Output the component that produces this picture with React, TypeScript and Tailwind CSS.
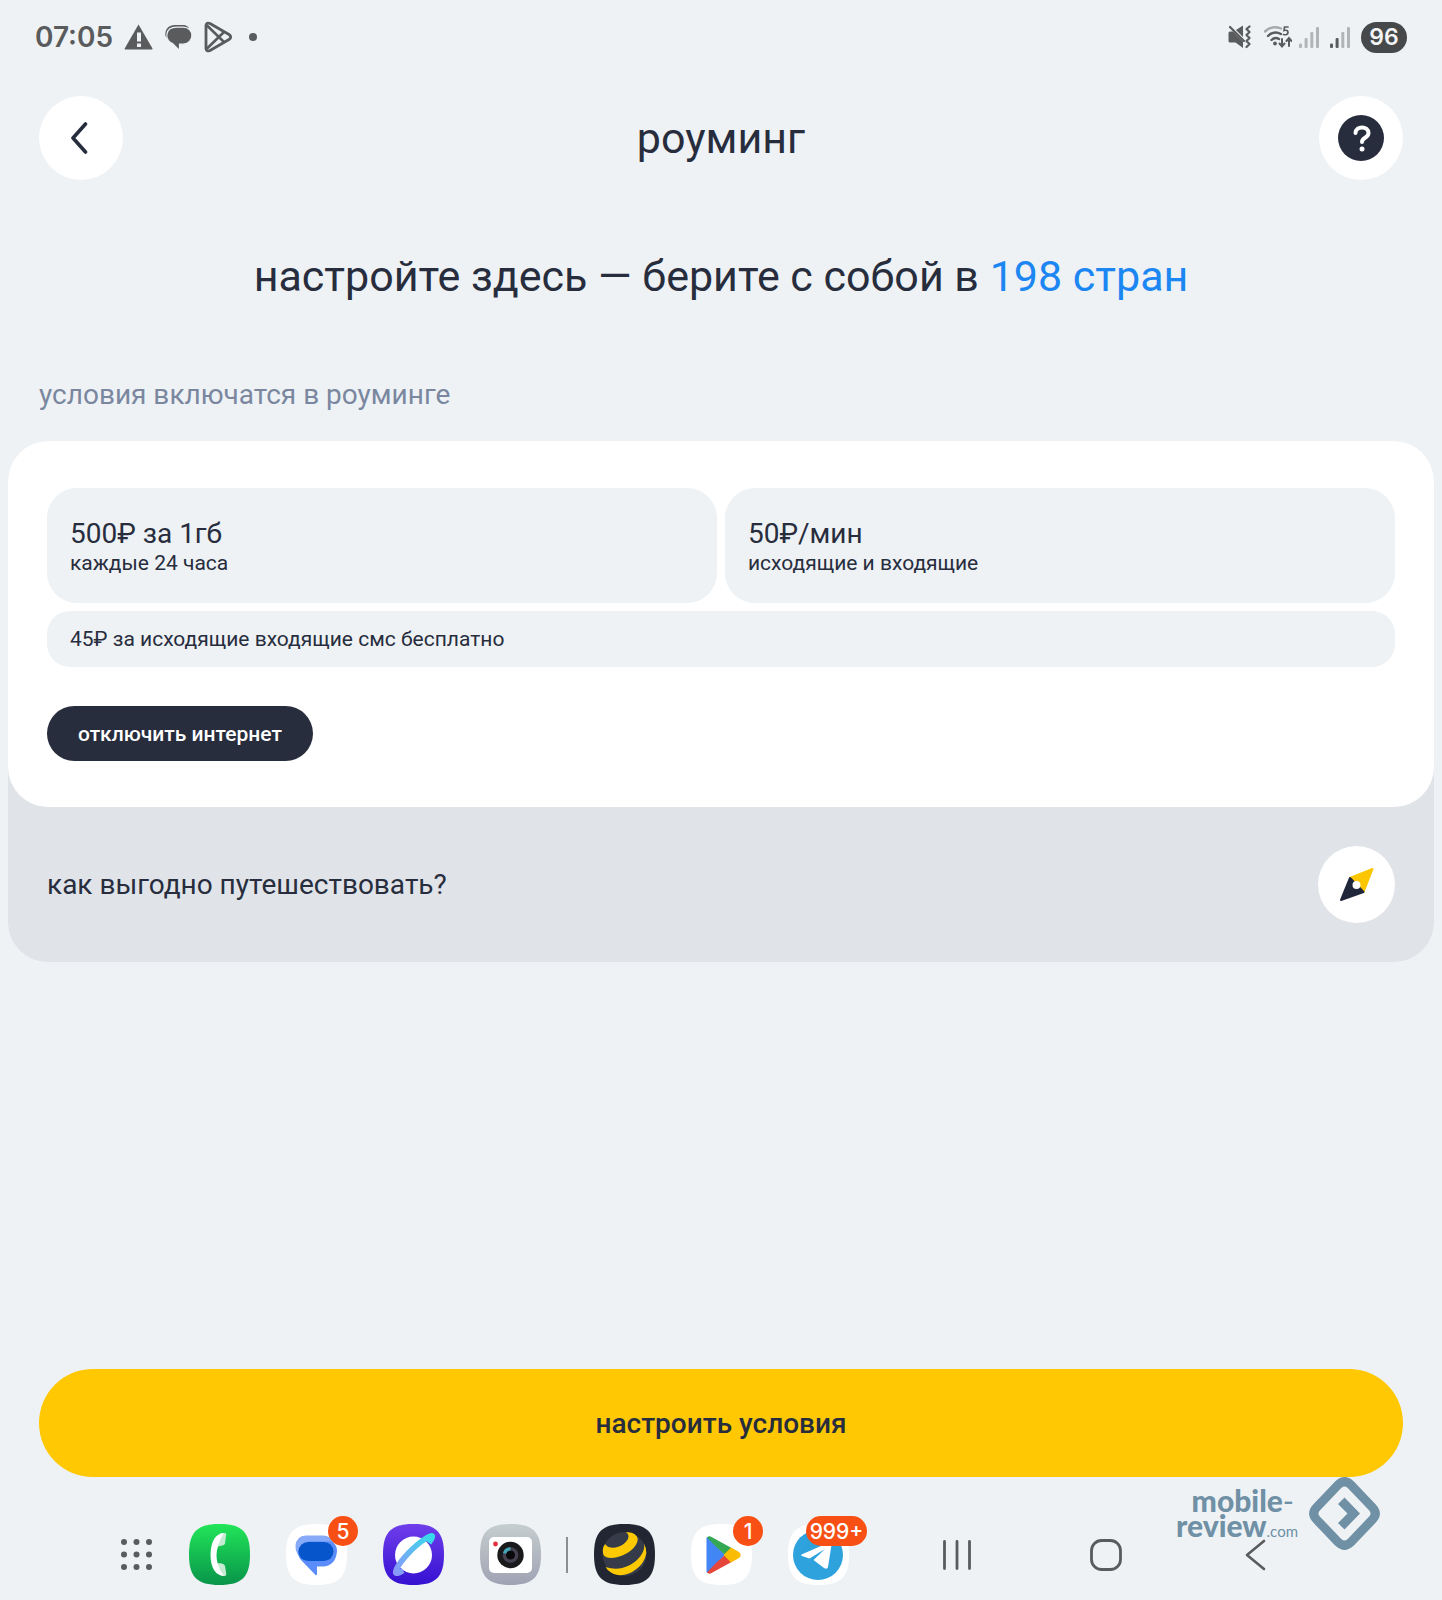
import React from 'react';

interface AppIconProps {
  label: string;
  badge?: string;
  children: React.ReactNode;
}

const SQUIRCLE = 'M30.5 0C53 0 61 8 61 30.5S53 61 30.5 61 0 53 0 30.5 8 0 30.5 0Z';

const AppIcon: React.FC<AppIconProps> = ({ label, badge, children }) => (
  <button type="button" aria-label={label} className="relative block">
    <svg width="61" height="61" viewBox="0 0 61 61">
      {children}
    </svg>
    {badge && (
      <span
        className={`absolute -top-2 flex h-[30px] items-center justify-center rounded-full bg-[#f84f14] font-['Inter'] text-[21px] leading-none font-medium text-white ${
          badge.length > 1 ? 'left-[18px] w-[61px]' : 'left-[42px] w-[30px]'
        }`}
      >
        {badge}
      </span>
    )}
  </button>
);

const StatusBar = () => (
  <div className="flex h-[74px] items-center justify-between px-[35px] font-['Inter'] text-[#5a5b5c]">
    <div className="flex items-center">
      <span className="w-[89px] text-[28px] font-semibold">07:05</span>
      <svg className="mr-3" width="29" height="26" viewBox="0 0 28 26">
        <path d="M14 0.5L28 24.5Q28.200 25.500 27 25.500H1Q-0.200 25.500 0.200 24.500Z" fill="currentColor" />
        <path d="M12.500 8.500h4v9h-4zM12.500 19.500h4v3.500h-4z" fill="#eef2f5" />
      </svg>
      <svg className="mr-[11px]" width="28" height="28" viewBox="0 0 28 28">
        <path d="M0.500 13C-0.500 7 3 2 10 2H17C20 2 22 2.500 24 5L12 14L2 15Z" fill="currentColor" />
        <path
          d="M11.500 4.200H18C30 4.200 29.500 20.500 18.500 21.200H14.500V27.500L7.500 20.500C-1 16.500 0 4.200 11.500 4.200Z"
          fill="currentColor"
          stroke="#eef2f5"
          strokeWidth="1.200"
        />
      </svg>
      <svg width="29" height="32" viewBox="0 0 29 32" fill="none" stroke="currentColor" strokeWidth="2.800">
        <path d="M2 4.500Q2.500 1 6 2.500L25 13.500Q28.500 16 25 18.500L6 29.500Q2.500 31 2 27.500Z" strokeLinejoin="round" />
        <path d="M3 4.500L20 21M3 27.500L20 11" strokeWidth="2.600" />
      </svg>
      <span className="ml-4 h-2 w-2 rounded-full bg-[#5a5b5c]" />
    </div>
    <div className="flex items-center">
      {/* Muted / vibrate */}
      <svg className="mr-3" width="24" height="24" viewBox="0 0 24 24" fill="none">
        <path d="M0.500 8Q0.500 6.500 2 6.500H5L15 16.500V23L7.500 17.500H2Q0.500 17.500 0.500 16ZM8 5L15 0.500V12Z" fill="currentColor" />
        <path d="M2 2L16 16" stroke="currentColor" strokeWidth="2.200" strokeLinecap="round" />
        <path
          d="M21.500 1.500L18.500 4L21.500 7L18.500 10L21.500 13L18.500 16L21.500 19L18.500 22"
          stroke="currentColor"
          strokeWidth="2.200"
          strokeLinejoin="round"
          strokeLinecap="round"
        />
      </svg>
      {/* Wi-Fi */}
      <svg className="mr-[7px]" width="28" height="24" viewBox="0 0 28 24" fill="none" strokeLinecap="round">
        <path d="M1 6.500Q8 0 17 3.500" stroke="#a6a9ab" strokeWidth="2.400" />
        <path d="M4 11Q10 5 17 9M7.500 15Q11 11.500 15 14" stroke="currentColor" strokeWidth="2.400" />
        <circle cx="11" cy="18.500" r="1.900" fill="currentColor" />
        <path d="M24 2H20.500L20 5.500Q24 4.500 24 7.500Q23.500 10.500 19.500 9.500" stroke="currentColor" strokeWidth="1.700" />
        <path d="M18 14V21M15.500 18.500L18 21.500L20.500 18.500M25 21V13.500M22.500 16L25 13L27.500 16" stroke="currentColor" strokeWidth="2" />
      </svg>
      <svg className="mr-[11px]" width="20" height="22" viewBox="0 0 20 22" fill="#b2b5b7">
        <rect y="17.500" width="3" height="4.500" rx="1" />
        <rect x="5.600" y="12" width="3" height="10" rx="1" />
        <rect x="11.300" y="6" width="3" height="16" rx="1" />
        <rect x="17" y="1" width="3" height="21" rx="1" />
      </svg>
      <svg className="mr-[11px]" width="20" height="22" viewBox="0 0 20 22" fill="#b2b5b7">
        <rect y="17.500" width="3" height="4.500" rx="1" fill="#5a5b5c" />
        <rect x="5.600" y="12" width="3" height="10" rx="1" fill="#5a5b5c" />
        <rect x="11.300" y="6" width="3" height="16" rx="1" />
        <rect x="17" y="1" width="3" height="21" rx="1" />
      </svg>
      <span className="flex h-[31px] w-[46px] items-center justify-center rounded-full bg-[#474849] text-[23px] leading-none font-semibold text-[#f3f4f5]">
        96
      </span>
    </div>
  </div>
);

const Header = () => (
  <header className="mt-[22px] flex items-center justify-between px-[39px]">
    <button type="button" aria-label="назад" className="flex h-[84px] w-[84px] items-center justify-center rounded-full bg-white">
      <svg className="mr-[5px]" width="18" height="34" viewBox="0 0 18 34" fill="none">
        <path d="M15.500 3L3 17L15.500 31" stroke="#272d3d" strokeWidth="3.600" strokeLinecap="round" strokeLinejoin="round" />
      </svg>
    </button>
    <h1 className="text-[43px] leading-[56px]">роуминг</h1>
    <button type="button" aria-label="помощь" className="flex h-[84px] w-[84px] items-center justify-center rounded-full bg-white">
      <svg width="46" height="46" viewBox="0 0 46 46" fill="none">
        <circle cx="23" cy="23" r="23" fill="#272d3d" />
        <path d="M17.500 18C17.500 10.500 30.500 10.500 30.500 18C30.500 23 24 22.500 24 27" stroke="#fff" strokeWidth="4" strokeLinecap="round" />
        <circle cx="24" cy="34" r="2.500" fill="#fff" />
      </svg>
    </button>
  </header>
);

const Conditions = () => (
  <section className="mx-2 rounded-[40px] bg-[#e0e3e8]">
    <div className="rounded-[40px] bg-white px-[39px] pt-[47px] pb-[46px]">
      <div className="grid grid-cols-2 gap-2">
        <div className="h-[115px] rounded-[30px] bg-[#eef2f5] px-[23px] pt-[30px]">
          <p className="text-[28px] leading-8">500₽ за 1гб</p>
          <p className="text-[21px] leading-[26px]">каждые 24 часа</p>
        </div>
        <div className="h-[115px] rounded-[30px] bg-[#eef2f5] px-[23px] pt-[30px]">
          <p className="text-[28px] leading-8">50₽/мин</p>
          <p className="text-[21px] leading-[26px]">исходящие и входящие</p>
        </div>
      </div>
      <p className="mt-2 rounded-[23px] bg-[#eef2f5] px-[23px] py-[15px] text-[21px] leading-[26px]">
        45₽ за исходящие входящие смс бесплатно
      </p>
      <button type="button" className="mt-[39px] h-[55px] rounded-full bg-[#272d3d] px-[31px] text-[21px] leading-[26px] font-medium text-white">
        отключить интернет
      </button>
    </div>
    <a href="#travel" className="flex items-center justify-between px-[39px] py-[39px]">
      <span className="text-[28px] leading-9">как выгодно путешествовать?</span>
      <svg width="77" height="77" viewBox="0 0 77 77" strokeLinejoin="round" strokeWidth="2">
        <circle cx="38.500" cy="38.500" r="38.500" fill="#fff" />
        <path d="M54.500 23L32 32L45.500 46Z" fill="#fcc602" stroke="#fcc602" />
        <path d="M32 32L23 54L45.500 46Z" fill="#20273a" stroke="#20273a" />
        <circle cx="38.500" cy="39" r="4" fill="#fff" />
      </svg>
    </a>
  </section>
);

const Dock = () => (
  <nav className="flex h-[61px] items-center justify-between pr-[171px] pl-[120px]">
    <div className="flex items-center">
      <div className="flex items-center gap-9">
        <button type="button" aria-label="Приложения">
          <svg width="33" height="33" viewBox="0 0 33 33" fill="#5a5b5c">
            {[4, 16.5, 29].map((y) => [4, 16.5, 29].map((x) => <circle key={`${x}-${y}`} cx={x} cy={y} r="3" />))}
          </svg>
        </button>
        <AppIcon label="Телефон">
          <defs>
            <linearGradient id="phone" x2="0" y2="1">
              <stop stopColor="#22e558" />
              <stop offset="1" stopColor="#08944a" />
            </linearGradient>
          </defs>
          <path d={SQUIRCLE} fill="url(#phone)" />
          <path d="M31 9.500L36 9Q37.500 9 37.200 10.500L36 19.500Q35.500 21.500 33 21.500L29 22.500ZM28.500 39L33 39.500Q35.500 40 36 42L37.300 50Q37.500 52 35.500 52L31 51Z" fill="#c5ecd2" />
          <path d="M35 9L31 16L29 22.500Q27.500 26 27.500 31Q27.500 35 28.500 39L31 46L35 52Q22 51 21.500 31Q22 10 35 9Z" fill="#fff" />
        </AppIcon>
        <AppIcon label="Сообщения" badge="5">
          <path d={SQUIRCLE} fill="#fff" />
          <path d="M20 11.500H37Q45 11.500 48 19L44 36H22Q9.500 34 9.500 22Q10 12 20 11.500Z" fill="#86a9f8" />
          <path d="M22 17.500H45Q51 20 51 27Q50 41 38 42.500H31V50Q31 52 29.500 51L15 36Q11 31 12.500 26Z" fill="#5b8dfa" />
          <rect x="12.500" y="18" width="35" height="19" rx="9.500" fill="#0755cb" />
        </AppIcon>
        <AppIcon label="Интернет">
          <defs>
            <linearGradient id="browser" x2="0" y2="1">
              <stop stopColor="#6f3eea" />
              <stop offset="1" stopColor="#3511d2" />
            </linearGradient>
            <linearGradient id="ring" x1="1" x2="0" y2="1">
              <stop stopColor="#35dbe9" />
              <stop offset="1" stopColor="#8b98fa" />
            </linearGradient>
          </defs>
          <path d={SQUIRCLE} fill="url(#browser)" />
          <circle cx="30.500" cy="31" r="18.500" fill="#fff" />
          <path d="M46 19C53 9 48 11 42 15C31 22 18 36 13.500 45C11 51 14 50 20 46.500" fill="none" stroke="url(#ring)" strokeWidth="5.500" strokeLinejoin="round" />
        </AppIcon>
        <AppIcon label="Камера">
          <defs>
            <linearGradient id="camera" x2="0" y2="1">
              <stop stopColor="#c5cecf" />
              <stop offset="1" stopColor="#a0a2b3" />
            </linearGradient>
          </defs>
          <path d={SQUIRCLE} fill="url(#camera)" />
          <rect x="9" y="13" width="43" height="36" rx="5" fill="#fff" />
          <circle cx="15.500" cy="20" r="2.400" fill="#e4303c" />
          <circle cx="30.500" cy="31" r="13.200" fill="#1a191b" />
          <circle cx="30.500" cy="31" r="7.800" fill="#464150" />
          <path d="M30.500 31V23.200A7.800 7.800 0 0 0 23 29Z" fill="#42a6b8" />
          <circle cx="30.500" cy="31" r="4.500" fill="#09090b" />
        </AppIcon>
      </div>
      <div className="mr-[26px] ml-[25px] h-9 w-[2px] bg-[#8b8d8f]" />
      <div className="flex items-center gap-9">
        <AppIcon label="билайн">
          <path d={SQUIRCLE} fill="#222632" />
          <circle cx="30.500" cy="30" r="22" fill="#353b48" />
          <path d="M11 20C15 26 24 24 29 20.500Q35 16 34.500 11.500Q34 9.500 32 8.500C38 7.500 43.500 11 43.800 15.500C43 23 35 29 27 32C19 35 12 34.500 9.500 31Q7.500 25 11 20Z" fill="#fdc903" />
          <path d="M50 19.500Q52.500 24 52.300 29C51 37 47 42 41 46C34 51.500 24 53 17 48.500Q13 46 11.500 43C26 47.500 36 42 43 36C49 30 51 25 50 19.500Z" fill="#fdc903" />
        </AppIcon>
        <AppIcon label="Google Play" badge="1">
          <path d={SQUIRCLE} fill="#fff" />
          <path d="M15.500 14V48Q16 49 17 49L34 31L17 13Q16 12.500 15.500 14Z" fill="#4285f4" />
          <path d="M16 13.500Q18 11.500 20.500 13L41.500 24.500L34 31Q24 22 16 13.500Z" fill="#34a853" />
          <path d="M16 48.500Q18 50.500 20.500 49L41.500 37.500L34 31Q24 39 16 48.500Z" fill="#e5453a" />
          <path d="M40 23.500L48 28Q51.500 31 48 34L40 38.500L32.500 31Z" fill="#fbbc04" />
        </AppIcon>
        <AppIcon label="Telegram" badge="999+">
          <path d={SQUIRCLE} fill="#fff" />
          <circle cx="30" cy="31" r="25" fill="#2ea2dc" />
          <path d="M13.500 30.500L41 18.500Q44 17.500 43.500 21L40 43Q39 46 36 44L25.500 36L37 25L21.500 34.500L14 32Q12.500 31 13.500 30.500Z" fill="#fff" />
        </AppIcon>
      </div>
    </div>
    <div className="flex items-center gap-[117px]">
      <button type="button" aria-label="Недавние">
        <svg width="32" height="32" viewBox="0 0 32 32" stroke="#5a5b5c" strokeWidth="2.800" strokeLinecap="round">
          <path d="M3.500 2.500V29.500M16 2.500V29.500M28.500 2.500V29.500" />
        </svg>
      </button>
      <button type="button" aria-label="Главная">
        <svg width="32" height="32" viewBox="0 0 32 32" fill="none" stroke="#5a5b5c" strokeWidth="2.800">
          <rect x="1.500" y="1.500" width="29" height="29" rx="10" />
        </svg>
      </button>
      <button type="button" aria-label="Назад">
        <svg width="32" height="32" viewBox="0 0 32 32" fill="none" stroke="#5a5b5c" strokeWidth="2.600" strokeLinecap="round" strokeLinejoin="round">
          <path d="M25 2L8 16L25 30" />
        </svg>
      </button>
    </div>
  </nav>
);

const Watermark = () => (
  <div className="pointer-events-none absolute right-[62px] bottom-[50px] flex items-center gap-[11px] text-[#6f90a5]">
    <div className="pt-1 text-right font-['Lato'] text-[30px] leading-[25px] font-black">
      <p className="pr-1">
        mobile<span className="font-normal">-</span>
      </p>
      <p>
        review<span className="text-[15px] font-normal">.com</span>
      </p>
    </div>
    <svg width="71" height="73" viewBox="0 0 71 73" fill="none">
      <path
        d="M29.500 7.500Q35.500 2 41.500 7.500L63.500 30.500Q69 36.500 63.500 42.500L41.500 65.500Q35.500 71 29.500 65.500L7.500 42.500Q2 36.500 7.500 30.500Z"
        stroke="currentColor"
        strokeWidth="9"
      />
      <path d="M35.500 20.500L51 36.500L35.500 52.500L29 46L38.500 36.500L29 27Z" fill="currentColor" />
    </svg>
  </div>
);

const App: React.FC = () => {
  return (
    <div className="relative flex min-h-screen flex-col bg-[#eef2f5] font-['Roboto','Noto_Sans',sans-serif] text-[#272d3d]">
      <StatusBar />
      <Header />
      <main className="flex flex-1 flex-col">
        <h2 className="mt-[68px] text-center text-[43px] leading-[56px]">
          настройте здесь — берите с собой в <span className="text-[#1c86f2]">198 стран</span>
        </h2>
        <p className="mt-[73px] mb-7 px-[39px] text-[28px] leading-9 text-[#7a879f]">условия включатся в роуминге</p>
        <Conditions />
        <div className="mt-auto px-[39px] pt-10 pb-[47px]">
          <button type="button" className="h-[108px] w-full rounded-full bg-[#ffc803] pt-[2px] text-[28px] leading-9 font-medium">
            настроить условия
          </button>
        </div>
      </main>
      <footer className="pb-[15px]">
        <Dock />
      </footer>
      <Watermark />
    </div>
  );
};

export default App;
